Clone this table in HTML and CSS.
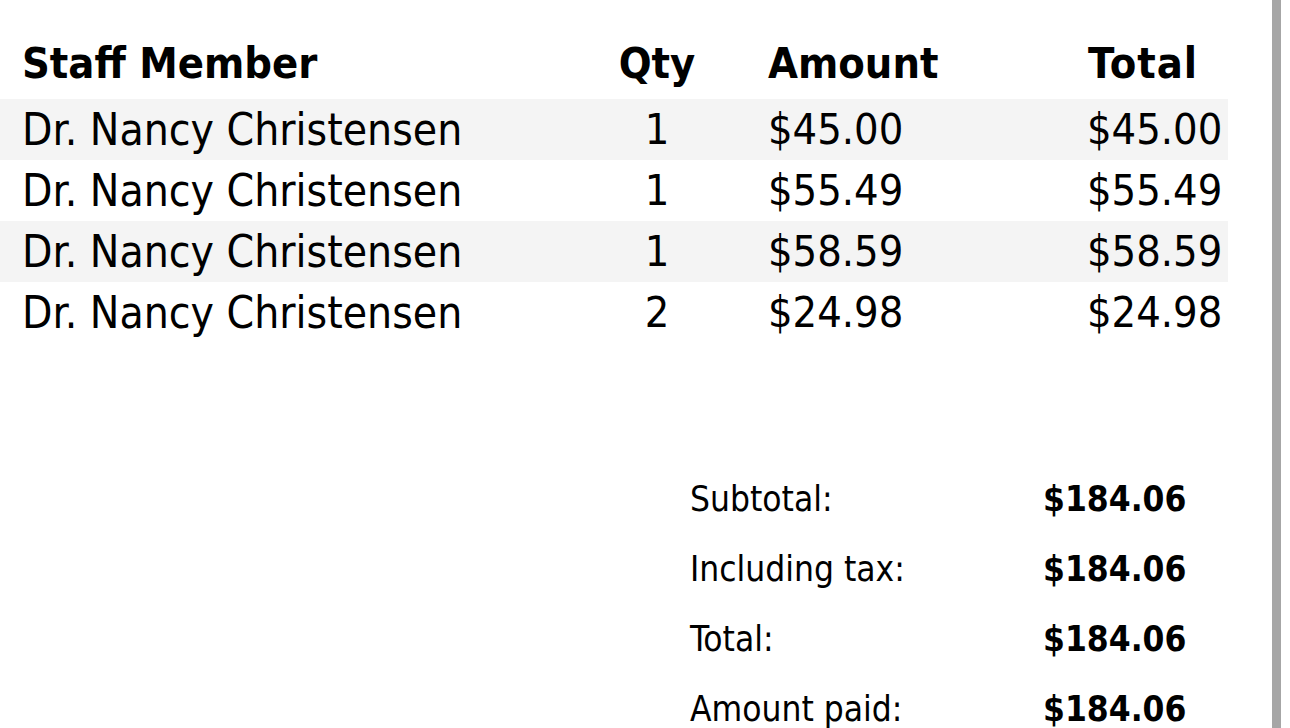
FILE: index.html
```html
<!DOCTYPE html>
<html>
<head>
<meta charset="utf-8">
<link rel="stylesheet" href="styles.css">
</head>
<body>
<div class="page">
  <main class="content">
    <div class="table">
      <div class="row head">
        <div class="c staff">Staff Member</div>
        <div class="c qty">Qty</div>
        <div class="c amt">Amount</div>
        <div class="c tot">Total</div>
      </div>
      <div class="row alt">
        <div class="c staff">Dr. Nancy Christensen</div>
        <div class="c qty">1</div>
        <div class="c amt">$45.00</div>
        <div class="c tot">$45.00</div>
      </div>
      <div class="row">
        <div class="c staff">Dr. Nancy Christensen</div>
        <div class="c qty">1</div>
        <div class="c amt">$55.49</div>
        <div class="c tot">$55.49</div>
      </div>
      <div class="row alt">
        <div class="c staff">Dr. Nancy Christensen</div>
        <div class="c qty">1</div>
        <div class="c amt">$58.59</div>
        <div class="c tot">$58.59</div>
      </div>
      <div class="row">
        <div class="c staff">Dr. Nancy Christensen</div>
        <div class="c qty">2</div>
        <div class="c amt">$24.98</div>
        <div class="c tot">$24.98</div>
      </div>
    </div>
    <div class="summary">
      <div class="label">Subtotal:</div><div class="value">$184.06</div>
      <div class="label">Including tax:</div><div class="value">$184.06</div>
      <div class="label">Total:</div><div class="value">$184.06</div>
      <div class="label">Amount paid:</div><div class="value">$184.06</div>
    </div>
  </main>
  <div class="bar"></div>
</div>
</body>
</html>
```
FILE: styles.css
```css
html, body {
  margin: 0;
  padding: 0;
  background: #fff;
}
body {
  font-family: "DejaVu Sans Condensed", "DejaVu Sans", sans-serif;
  font-stretch: condensed;
  color: #000;
  overflow: hidden;
}
.page {
  display: flex;
  width: 1290px;
  height: 728px;
}
.content {
  width: 1272px;
  flex: none;
}
.bar {
  width: 9px;
  background: #a6a6a6;
  flex: none;
}
.table {
  width: 1228px;
  margin-top: 33px;
}
.row {
  display: grid;
  grid-template-columns: 608px 98px 319px 203px;
  height: 61px;
  font-size: 43px;
  line-height: 61px;
  white-space: nowrap;
}
.row .staff {
  font-size: 44px;
}
.row.head {
  font-weight: bold;
  font-size: 43px;
  height: 66px;
}
.row.head .staff {
  font-size: 43px;
}
.row.alt {
  background: #f4f4f4;
}
.staff {
  padding-left: 22px;
}
.qty {
  text-align: center;
}
.amt, .tot {
  padding-left: 62px;
}
.head .tot {
  padding-left: 63px;
  letter-spacing: 1px;
}
.summary {
  display: grid;
  grid-template-columns: 353px auto;
  margin-top: 121px;
  margin-left: 690px;
  font-size: 35px;
  line-height: 70px;
  white-space: nowrap;
}
.value {
  font-weight: bold;
}
```
